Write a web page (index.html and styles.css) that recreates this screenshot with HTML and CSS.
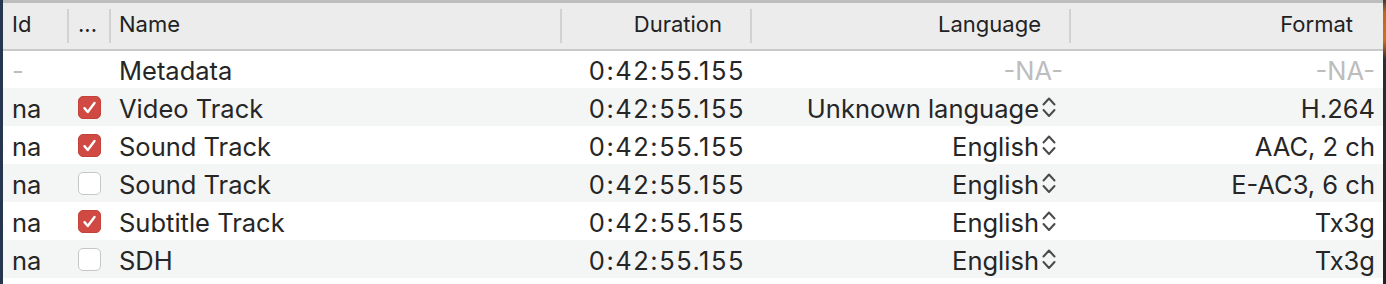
FILE: index.html
```html
<!DOCTYPE html>
<html lang="en">
<head>
  <meta charset="UTF-8">
  <title>Tracks</title>
  <link rel="stylesheet" href="styles.css">
</head>
<body>
  <div class="edge-left"></div>

  <div class="panel">
    <table class="tracks">
      <colgroup>
        <col class="c-id">
        <col class="c-chk">
        <col class="c-name">
        <col class="c-dur">
        <col class="c-lang">
        <col class="c-fmt">
      </colgroup>
      <thead>
        <tr>
          <th class="left sep">Id</th>
          <th class="left sep dots">...</th>
          <th class="left sep name">Name</th>
          <th class="right sep">Duration</th>
          <th class="right sep">Language</th>
          <th class="right">Format</th>
        </tr>
      </thead>
      <tbody>
        <tr>
          <td class="muted">-</td>
          <td class="cb"></td>
          <td class="name">Metadata</td>
          <td class="dur">0:42:55.155</td>
          <td class="lang muted-lang">-NA-</td>
          <td class="fmt muted">-NA-</td>
        </tr>
        <tr>
          <td>na</td>
          <td class="cb"><span class="check on"></span></td>
          <td class="name">Video Track</td>
          <td class="dur">0:42:55.155</td>
          <td class="lang"><span class="pop">Unknown language<svg viewBox="0 0 14 26" width="14" height="26"><path d="M1.5 10.5 7 4.5l5.5 6M1.5 16 7 22l5.5-6"/></svg></span></td>
          <td class="fmt">H.264</td>
        </tr>
        <tr>
          <td>na</td>
          <td class="cb"><span class="check on"></span></td>
          <td class="name">Sound Track</td>
          <td class="dur">0:42:55.155</td>
          <td class="lang"><span class="pop">English<svg viewBox="0 0 14 26" width="14" height="26"><path d="M1.5 10.5 7 4.5l5.5 6M1.5 16 7 22l5.5-6"/></svg></span></td>
          <td class="fmt">AAC, 2 ch</td>
        </tr>
        <tr>
          <td>na</td>
          <td class="cb"><span class="check"></span></td>
          <td class="name">Sound Track</td>
          <td class="dur">0:42:55.155</td>
          <td class="lang"><span class="pop">English<svg viewBox="0 0 14 26" width="14" height="26"><path d="M1.5 10.5 7 4.5l5.5 6M1.5 16 7 22l5.5-6"/></svg></span></td>
          <td class="fmt">E-AC3, 6 ch</td>
        </tr>
        <tr>
          <td>na</td>
          <td class="cb"><span class="check on"></span></td>
          <td class="name">Subtitle Track</td>
          <td class="dur">0:42:55.155</td>
          <td class="lang"><span class="pop">English<svg viewBox="0 0 14 26" width="14" height="26"><path d="M1.5 10.5 7 4.5l5.5 6M1.5 16 7 22l5.5-6"/></svg></span></td>
          <td class="fmt">Tx3g</td>
        </tr>
        <tr>
          <td>na</td>
          <td class="cb"><span class="check"></span></td>
          <td class="name">SDH</td>
          <td class="dur">0:42:55.155</td>
          <td class="lang"><span class="pop">English<svg viewBox="0 0 14 26" width="14" height="26"><path d="M1.5 10.5 7 4.5l5.5 6M1.5 16 7 22l5.5-6"/></svg></span></td>
          <td class="fmt">Tx3g</td>
        </tr>
      </tbody>
    </table>
  </div>

  <div class="edge-right"></div>
</body>
</html>
```

FILE: styles.css
```css
* { box-sizing: border-box; margin: 0; padding: 0; }

body {
  display: flex;
  height: 284px;
  overflow: hidden;
  background: #fff;
  font-family: Inter, "Noto Sans", sans-serif;
  color: #262626;
}

.edge-left {
  width: 3px;
  background: #26364f;
}
.edge-right {
  width: 3px;
  background: linear-gradient(#3a3a3a 0, #c2641f 12px, #d0701f 40px, #2a2d33 60px, #1f2127 100%);
}

.panel {
  flex: 1;
  border-top: 3px solid #bdbdbd;
  background: #fff;
}

/* table */
.tracks {
  width: 100%;
  border-collapse: collapse;
  table-layout: fixed;
}
.c-id   { width: 66px; }
.c-chk  { width: 42px; }
.c-name { width: 451px; }
.c-dur  { width: 190px; }
.c-lang { width: 319px; }
.c-fmt  { width: 312px; }

.tracks th {
  height: 47px;
  padding-bottom: 4px;
  background: #ececec;
  border-bottom: 2px solid #c9c9c9;
  font-size: 22px;
  font-weight: 400;
  color: #222;
  white-space: nowrap;
}
.tracks th.left  { text-align: left; padding-left: 9px; }
.tracks th.dots  { padding-left: 9px; }
.tracks th.name  { padding-left: 8px; }
.tracks th.right { text-align: right; padding-right: 30px; }
.tracks th.sep {
  background-image: linear-gradient(#d2d2d2, #d2d2d2);
  background-repeat: no-repeat;
  background-size: 2px 34px;
  background-position: right 6px;
}

.tracks td {
  height: 38px;
  font-size: 25.5px;
  white-space: nowrap;
  padding-left: 9px;
  padding-top: 2px;
  vertical-align: middle;
}
.tracks td.cb { padding-top: 0; }
.tracks tbody tr:nth-child(even) td { background: #f4f5f5; }

.tracks td.name { padding-left: 8px; }
.tracks td.dur  { text-align: right; padding-right: 7px; letter-spacing: 1.5px; }
.tracks td.lang { text-align: right; padding-right: 15px; }
.tracks td.fmt  { text-align: right; padding-right: 8px; }
.tracks td.muted { color: #bdbdbd; }
.tracks td.muted-lang { color: #bdbdbd; padding-right: 8px; }

/* popup button look */
.pop {
  display: inline-flex;
  align-items: center;
  gap: 3px;
}
.pop svg {
  fill: none;
  stroke: #4a4a4a;
  stroke-width: 2;
  stroke-linecap: round;
  stroke-linejoin: round;
  margin-top: -2px;
}

/* checkbox */
.check {
  display: block;
  width: 23px;
  height: 23px;
  border: 1px solid #c6c6c6;
  border-radius: 5px;
  background: #fff;
}
.check.on {
  border-color: #c4423b;
  background: #d04a43 url("data:image/svg+xml,%3Csvg xmlns='http://www.w3.org/2000/svg' viewBox='0 0 23 23'%3E%3Cpath d='M6 12.2l3.6 4.2L17 6.5' fill='none' stroke='%23fff' stroke-width='2.6' stroke-linecap='round' stroke-linejoin='round'/%3E%3C/svg%3E") center / 100% no-repeat;
}
```
